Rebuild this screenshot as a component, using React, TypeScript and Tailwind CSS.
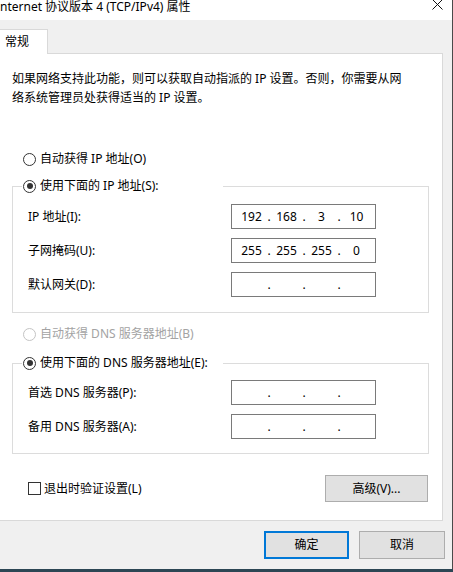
import React from "react";

function Radio({ checked, disabled }: { checked?: boolean; disabled?: boolean }) {
  return (
    <span
      className={`w-[13px] h-[13px] rounded-full border bg-white flex items-center justify-center shrink-0 ${
        disabled ? "border-[#c4c4c4]" : "border-[#333333]"
      }`}
    >
      {checked && <span className="w-[6px] h-[6px] rounded-full bg-[#333333]" />}
    </span>
  );
}

function IpBox({ parts }: { parts: string[] }) {
  const segs = [0, 1, 2, 3];
  return (
    <div className="w-[145px] h-[25px] border border-[#7a7a7a] bg-white flex items-center pl-[4px] text-[12px] leading-[14px] text-black">
      {segs.map((i) => (
        <React.Fragment key={i}>
          <span className="w-[31px] text-center">{parts[i] ?? ""}</span>
          {i < 3 && <span className="w-[4px] text-center">.</span>}
        </React.Fragment>
      ))}
    </div>
  );
}

function FieldRow({ label, parts }: { label: string; parts: string[] }) {
  return (
    <div className="flex items-center h-[25px]">
      <span className="w-[203px] text-[12px] leading-[14px] text-black whitespace-nowrap">{label}</span>
      <IpBox parts={parts} />
    </div>
  );
}

export default function App() {
  return (
    <div className="w-[453px] h-[572px] bg-[#2c4654] flex flex-col overflow-hidden font-['Noto_Sans','Noto_Sans_CJK_SC',sans-serif] text-black">
      <div className="w-[453px] h-[569px] flex flex-col border-r border-[#4a4a4a] bg-[#f0f0f0]">
        {/* Title bar */}
        <div className="h-[20px] bg-white flex items-start justify-between">
          <span className="text-[12px] leading-[14px] whitespace-nowrap">nternet 协议版本 4 (TCP/IPv4) 属性</span>
          <svg width="11" height="11" viewBox="0 0 11 11" className="mr-[9px] -mt-[1px]">
            <path d="M0.5 0.5 L10.5 10.5 M10.5 0.5 L0.5 10.5" stroke="#111111" strokeWidth="1" fill="none" />
          </svg>
        </div>

        {/* Body */}
        <div className="flex-1 flex flex-col">
          <div className="pt-[9px] flex">
            <div className="ml-[-1px] w-[49px] h-[25px] border-t border-l border-r border-[#d9d9d9] bg-white relative z-10 mb-[-1px] flex items-center pl-[5px] text-[12px] leading-[14px]">
              常规
            </div>
          </div>

          <div className="ml-[-1px] w-[444px] h-[468px] border border-[#d9d9d9] bg-white flex flex-col">
            <p className="pt-[15px] pl-[12px] text-[12px] leading-[19px] whitespace-nowrap">
              如果网络支持此功能，则可以获取自动指派的 IP 设置。否则，你需要从网
              <br />
              络系统管理员处获得适当的 IP 设置。
            </p>

            <div className="mt-[43px] ml-[23px] h-[18px] flex items-center gap-[4px] text-[12px] leading-[14px]">
              <Radio />
              <span>自动获得 IP 地址(O)</span>
            </div>

            <fieldset className="mt-[9px] ml-[12px] w-[417px] border border-[#dcdcdc] pb-[15px] flex flex-col">
              <legend className="ml-[9px] w-[201px] h-[18px] flex items-center gap-[4px] pl-[1px] text-[12px] leading-[14px]">
                <Radio checked />
                <span>使用下面的 IP 地址(S):</span>
              </legend>
              <div className="mt-[9px] pl-[15px] flex flex-col gap-[9px]">
                <FieldRow label="IP 地址(I):" parts={["192", "168", "3", "10"]} />
                <FieldRow label="子网掩码(U):" parts={["255", "255", "255", "0"]} />
                <FieldRow label="默认网关(D):" parts={["", "", "", ""]} />
              </div>
            </fieldset>

            <div className="mt-[12px] ml-[23px] h-[18px] flex items-center gap-[4px] text-[12px] leading-[14px] text-[#a3a3a3]">
              <Radio disabled />
              <span>自动获得 DNS 服务器地址(B)</span>
            </div>

            <fieldset className="mt-[11px] ml-[12px] w-[417px] border border-[#dcdcdc] pb-[14px] flex flex-col">
              <legend className="ml-[9px] w-[201px] h-[18px] flex items-center gap-[4px] pl-[1px] text-[12px] leading-[14px]">
                <Radio checked />
                <span className="whitespace-nowrap">使用下面的 DNS 服务器地址(E):</span>
              </legend>
              <div className="mt-[8px] pl-[15px] flex flex-col gap-[9px]">
                <FieldRow label="首选 DNS 服务器(P):" parts={["", "", "", ""]} />
                <FieldRow label="备用 DNS 服务器(A):" parts={["", "", "", ""]} />
              </div>
            </fieldset>

            <div className="mt-[21px] flex items-center">
              <div className="ml-[28px] flex items-center gap-[3px] text-[12px] leading-[14px]">
                <span className="w-[13px] h-[13px] border border-[#333333] bg-white shrink-0" />
                <span>退出时验证设置(L)</span>
              </div>
              <button className="ml-auto mr-[14px] w-[103px] h-[27px] border border-[#adadad] bg-[#e1e1e1] text-[12px] leading-[14px] text-black">
                高级(V)...
              </button>
            </div>
          </div>

          <div className="mt-[10px] mr-[7px] flex justify-end gap-[10px]">
            <button className="w-[85px] h-[28px] border-2 border-[#0078d7] bg-[#e1e1e1] text-[12px] leading-[14px] text-black">
              确定
            </button>
            <button className="w-[86px] h-[28px] border border-[#adadad] bg-[#e1e1e1] text-[12px] leading-[14px] text-black">
              取消
            </button>
          </div>
        </div>
      </div>
    </div>
  );
}
